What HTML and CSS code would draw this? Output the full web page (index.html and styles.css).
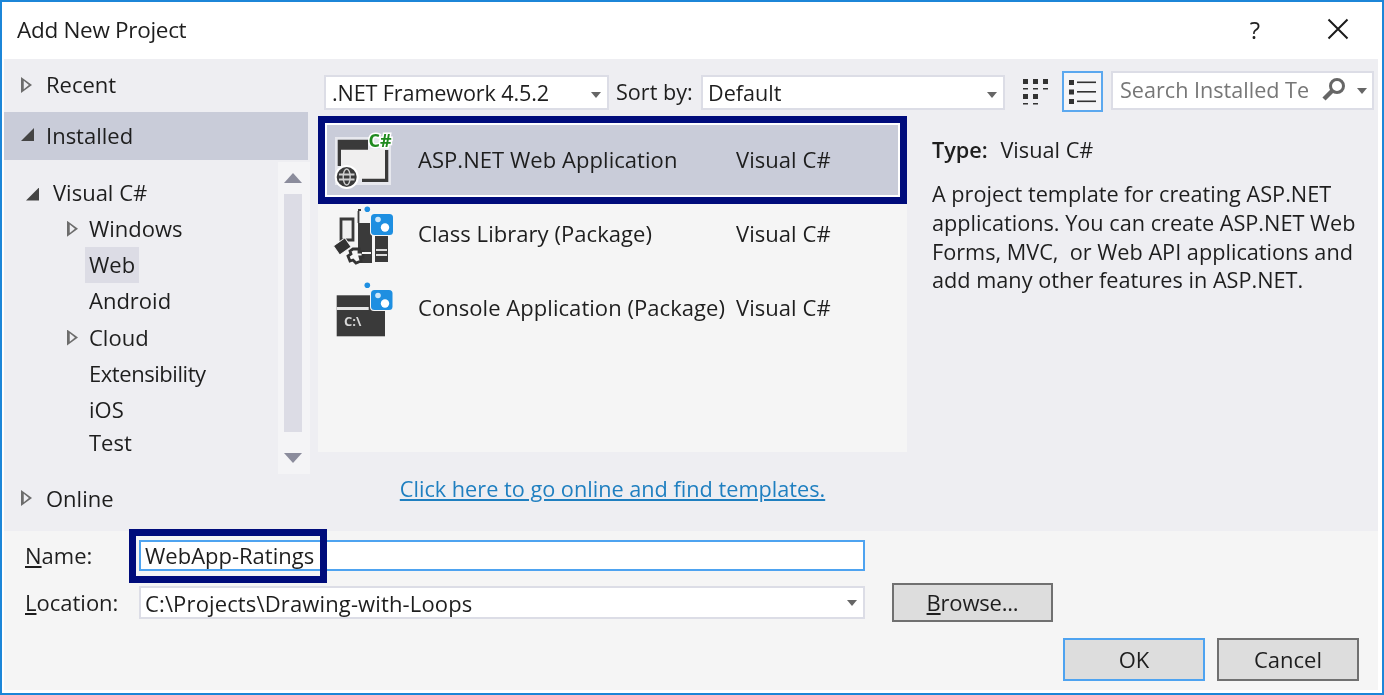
FILE: index.html
```html
<!DOCTYPE html>
<html lang="en">
<head>
<meta charset="utf-8">
<title>Add New Project</title>
<link rel="stylesheet" href="styles.css">
</head>
<body>
<div class="dialog">
  <header class="titlebar">
    <h1 class="title">Add New Project</h1>
    <span class="help">?</span>
    <svg class="close" width="22" height="22" viewBox="0 0 22 22"><path d="M1.500 1.500L20.500 20.500M20.500 1.500L1.500 20.500" stroke="#1a1a1a" stroke-width="2" fill="none"/></svg>
  </header>

  <div class="main">
    <nav class="sidebar">
      <div class="cat cat-recent"><span class="tri tri-open"></span>Recent</div>
      <div class="cat cat-selected"><span class="tri tri-down"></span>Installed</div>
      <div class="treebox">
        <ul class="tree">
          <li class="node node-root"><span class="tri tri-down"></span>Visual C#</li>
          <li class="node"><span class="tri tri-open"></span><span class="lbl">Windows</span></li>
          <li class="node"><span class="lbl lbl-sel">Web</span></li>
          <li class="node"><span class="lbl">Android</span></li>
          <li class="node"><span class="tri tri-open"></span><span class="lbl">Cloud</span></li>
          <li class="node"><span class="lbl lbl-ext">Extensibility</span></li>
          <li class="node"><span class="lbl">iOS</span></li>
          <li class="node node-last"><span class="lbl">Test</span></li>
        </ul>
        <div class="scrollbar">
          <span class="arrow-up"></span>
          <span class="thumb"></span>
          <span class="arrow-down"></span>
        </div>
      </div>
      <div class="cat cat-online"><span class="tri tri-open"></span>Online</div>
    </nav>

    <section class="content">
      <div class="toolbar">
        <div class="combo combo-fw"><span>.NET Framework 4.5.2</span><i class="caret"></i></div>
        <span class="sort-label">Sort by:</span>
        <div class="combo combo-sort"><span>Default</span><i class="caret"></i></div>
        <svg class="view-grid" width="28" height="28" viewBox="0 0 28 28" fill="#333">
          <rect x="1" y="1" width="5" height="5"/><rect x="11" y="1" width="5" height="5"/><rect x="21" y="1" width="5" height="5"/>
          <rect x="1" y="10" width="5" height="1.500"/><rect x="11" y="10" width="5" height="1.500"/><rect x="21" y="10" width="5" height="1.500"/>
          <rect x="1" y="16" width="5" height="5"/><rect x="11" y="16" width="5" height="5"/>
          <rect x="1" y="25" width="5" height="1.500"/><rect x="11" y="25" width="5" height="1.500"/>
        </svg>
        <div class="view-list">
          <svg width="28" height="24" viewBox="0 0 28 24" fill="#333">
            <rect x="0" y="0" width="5" height="5"/><rect x="8" y="1.500" width="19" height="1.600"/>
            <rect x="0" y="9.500" width="5" height="5"/><rect x="8" y="11" width="19" height="1.600"/>
            <rect x="0" y="19" width="5" height="5"/><rect x="8" y="20.500" width="19" height="1.600"/>
          </svg>
        </div>
        <div class="search">
          <span class="search-text">Search Installed Templates</span>
          <svg class="search-icon" width="26" height="24" viewBox="0 0 26 24"><circle cx="16" cy="9" r="6.500" fill="none" stroke="#666" stroke-width="3"/><path d="M11 14L3 22" stroke="#666" stroke-width="4.500" fill="none"/></svg>
          <i class="caret"></i>
        </div>
      </div>

      <div class="panes">
        <div class="listcol">
          <div class="list">
            <div class="row row-selected">
              <svg class="icon" width="66" height="68" viewBox="0 -4 66 68">
                <rect x="3" y="6" width="56" height="48" fill="#fff" opacity=".55"/>
                <rect x="9" y="18" width="44" height="30" fill="#f0efef"/>
                <path d="M5.700 8.700H36V18.700H9V35H5.700Z" fill="#3a3a3a"/>
                <path d="M53 19H56.300V51H30V47.700H53Z" fill="#3a3a3a"/>
                <text class="csharp" x="36.500" y="16">C#</text>
                <circle cx="14.700" cy="46" r="12" fill="#fff"/>
                <circle cx="14.700" cy="46" r="10" fill="#3a3a3a"/>
                <path d="M7 43.500H22.500M7 48.500H22.500" stroke="#cfcfcf" stroke-width="1.800"/>
                <ellipse cx="14.700" cy="46" rx="3.500" ry="8" fill="none" stroke="#cfcfcf" stroke-width="1.400"/>
              </svg>
              <span class="row-name">ASP.NET Web Application</span>
              <span class="row-lang">Visual C#</span>
            </div>
            <div class="row">
              <svg class="icon" width="64" height="60" viewBox="0 0 64 60">
                <path d="M9 14H21V35H9Z" fill="#f0f0f0" stroke="#3a3a3a" stroke-width="2.800"/>
                <path d="M26.500 6V18M26 5H29" stroke="#3a3a3a" stroke-width="1.800" fill="none"/>
                <rect x="26" y="18" width="14" height="40" fill="#3a3a3a"/>
                <rect x="43" y="30" width="13" height="27" fill="#3a3a3a"/>
                <path d="M44 45H55M44 50H55" stroke="#ddd" stroke-width="2"/>
                <rect x="3" y="36" width="14" height="11" transform="rotate(-35 10 41)" fill="#333" stroke="#f5f5f5"/>
                <path d="M21 44h6v3h4v5h-3l1 4-5 2-3-3-3 1-2-5 3-2-1-3z" fill="#f5f5f5" stroke="#333" stroke-width="2.800"/>
                <rect x="30" y="47" width="9" height="2" fill="#f5f5f5"/>
                <rect x="38" y="8" width="24" height="23" rx="4" fill="#f5f5f5"/>
                <rect x="39" y="9" width="22" height="21" rx="3.500" fill="#1e8fe1"/>
                <circle cx="46" cy="14.500" r="2.800" fill="#cfe8fa"/>
                <circle cx="53" cy="22.500" r="4.200" fill="#fff"/>
                <circle cx="35.300" cy="4.300" r="2.800" fill="#1e8fe1"/>
              </svg>
              <span class="row-name">Class Library (Package)</span>
              <span class="row-lang">Visual C#</span>
            </div>
            <div class="row">
              <svg class="icon" width="64" height="60" viewBox="0 0 64 60">
                <rect x="4.700" y="16.300" width="48.300" height="41" fill="#3a3a3a"/>
                <rect x="4.700" y="28" width="32" height="3" fill="#e6e6e6"/>
                <text class="prompt" x="12" y="47">C:\</text>
                <rect x="38" y="10" width="23" height="22" rx="4" fill="#f5f5f5"/>
                <rect x="39" y="11" width="21.500" height="20" rx="3.500" fill="#1e8fe1"/>
                <circle cx="46" cy="16.500" r="2.800" fill="#cfe8fa"/>
                <circle cx="53" cy="24.500" r="4.200" fill="#fff"/>
                <circle cx="35.300" cy="6.300" r="2.800" fill="#1e8fe1"/>
              </svg>
              <span class="row-name">Console Application (Package)</span>
              <span class="row-lang">Visual C#</span>
            </div>
          </div>
          <a class="online-link" href="#">Click here to go online and find templates.</a>
        </div>

        <aside class="details">
          <p class="type"><b>Type:</b> Visual C#</p>
          <p class="desc">A project template for creating ASP.NET applications. You can create ASP.NET Web Forms, MVC,&nbsp; or Web API applications and add many other features in ASP.NET.</p>
        </aside>
      </div>
    </section>
  </div>

  <footer class="bottom">
    <div class="field field-name">
      <label class="field-label"><u>N</u>ame:</label>
      <div class="name-input">
        <span>WebApp-Ratings</span>
        <span class="callout"></span>
      </div>
    </div>
    <div class="field field-loc">
      <label class="field-label"><u>L</u>ocation:</label>
      <div class="loc-input"><span class="loc-text">C:\Projects\Drawing-with-Loops</span><i class="caret"></i></div>
      <button class="btn btn-browse"><u>B</u>rowse...</button>
    </div>
    <div class="actions">
      <button class="btn btn-ok">OK</button>
      <button class="btn">Cancel</button>
    </div>
  </footer>
</div>
</body>
</html>
```

FILE: styles.css
```css
* { box-sizing: border-box; }
html, body { margin: 0; padding: 0; }
body {
  width: 1384px;
  height: 695px;
  overflow: hidden;
  font-family: "Open Sans", "Liberation Sans", sans-serif;
  font-size: 22px;
  color: #1e1e1e;
  background: #fff;
}
.dialog {
  width: 1384px;
  height: 695px;
  border: 2px solid #1c86d8;
  padding: 0 4px 3px 2px;
  background: #fff;
  display: flex;
  flex-direction: column;
  filter: blur(.45px);
}

/* title bar */
.titlebar {
  height: 57px;
  display: flex;
  align-items: center;
  padding: 0 29px 3px 13px;
}
.title { margin: 0; font-size: 22.500px; font-weight: 400; flex: 1; letter-spacing: -.3px; }
.help { font-size: 24px; margin-right: 67px; color: #222; }
.close { display: block; }

/* main */
.main {
  height: 472px;
  background: #eeeef2;
  display: flex;
}
.sidebar { width: 304px; flex: none; display: flex; flex-direction: column; }
.cat { display: flex; align-items: center; flex: none; padding: 0 0 2px 42px; position: relative; }
.cat-recent { height: 46px; margin-top: 3px; margin-bottom: 4px; }
.cat-selected { height: 48px; background: #c9ccd9; }
.cat-online { height: 48px; padding-bottom: 0; }
.cat .tri { position: absolute; left: 17px; top: 50%; margin-top: -8px; }

.tri { display: block; width: 14px; height: 16px; }
.tri-open {
  width: 11px;
  background: #6c6c6c;
  clip-path: polygon(0 0, 100% 50%, 0 100%, 0 0, 25% 24%, 25% 76%, 72% 50%, 25% 24%);
}
.tri-down {
  width: 13px;
  height: 13px;
  background: #444;
  clip-path: polygon(100% 0, 100% 100%, 0 100%);
}

.treebox { height: 312px; margin-top: 2px; display: flex; flex: none; }
.tree { list-style: none; margin: 0; padding: 12.500px 0 0; width: 274px; flex: none; }
.node { height: 36.250px; display: flex; align-items: center; padding-left: 81px; position: relative; }
.node .tri { position: absolute; left: 63px; top: 10px; }
.node-root { padding: 0 0 2px 49px; }
.node-root .tri { left: 22px; top: 13px; }
.node-last { margin-top: -3px; }
.lbl { padding: 0 4px; height: 36px; line-height: 35px; display: block; }
.lbl-sel { background: #dcdce5; }
.lbl-ext { letter-spacing: -.45px; }

.scrollbar {
  width: 32px;
  margin-right: -2px;
  flex: none;
  background: #f4f4f6;
  display: flex;
  flex-direction: column;
  align-items: center;
  padding-top: 11px;
}
.arrow-up { width: 0; height: 0; border: 9px solid transparent; border-top: 0; border-bottom: 10px solid #8b8c9c; margin-left: -2px; }
.thumb { width: 18px; height: 238px; background: #dcdce5; margin-top: 11px; margin-left: -2px; }
.arrow-down { width: 0; height: 0; border: 9px solid transparent; border-bottom: 0; border-top: 10px solid #8b8c9c; margin-top: 21px; margin-left: -2px; }

/* content */
.content { flex: 1; min-width: 0; display: flex; flex-direction: column; }
.toolbar { height: 57px; padding-top: 12px; display: flex; align-items: flex-start; font-size: 21.600px; }
.combo {
  height: 35px;
  margin-top: 4px;
  background: #fff;
  border: 2px solid #dcdde6;
  display: flex;
  align-items: center;
  padding: 0 6px 1px;
  position: relative;
}
.combo-fw { width: 285px; margin-left: 16px; letter-spacing: -.12px; }
.combo-sort { width: 304px; margin-left: 8px; padding-left: 5px; }
.sort-label { margin-left: 7px; width: 77px; line-height: 42px; white-space: nowrap; flex: none; }
.caret {
  display: block;
  width: 0;
  height: 0;
  border: 5px solid transparent;
  border-bottom: 0;
  border-top: 6px solid #666;
}
.combo .caret { position: absolute; right: 6px; top: 15px; }
.view-grid { margin: 7px 0 0 17px; flex: none; }
.view-list {
  width: 41px;
  height: 41px;
  margin-left: 12px;
  border: 2px solid #5ba8ef;
  background: #f5f5f7;
  display: flex;
  align-items: center;
  justify-content: center;
  flex: none;
}
.search {
  width: 263px;
  height: 39px;
  margin-left: 8px;
  background: #fff;
  border: 2px solid #dcdde6;
  display: flex;
  align-items: center;
  padding: 0 0 3px 7px;
  flex: none;
  position: relative;
}
.search-text { width: 189px; overflow: hidden; white-space: nowrap; color: #777; }
.search-icon { margin-left: 12px; flex: none; }
.search .caret { position: absolute; right: 5px; top: 15px; }

.panes { display: flex; flex: 1; min-height: 0; }
.listcol { width: 589px; margin-left: 10px; flex: none; display: flex; flex-direction: column; align-items: center; }
.list {
  width: 589px;
  height: 336px;
  background: #f5f5f5;
  padding: 7px 7px 0;
}
.row {
  height: 74px;
  display: grid;
  grid-template-columns: 93px 318px 1fr;
  align-items: center;
  padding-bottom: 3px;
}
.row-selected {
  background: #c9ccd9;
  outline: 7px solid #000c7b;
  box-shadow: inset 0 0 0 2px #fff;
}
.row .icon { display: block; margin-left: 7px; position: relative; top: 2px; }
.row-name, .row-lang { white-space: nowrap; letter-spacing: .05px; }
.csharp {
  font: 700 18px "Open Sans", sans-serif;
  fill: #1f8a1f;
  stroke: #fff;
  stroke-width: 3px;
  paint-order: stroke;
}
.prompt { font: 700 13px "Open Sans", sans-serif; fill: #d8d8d8; }
.online-link { margin-top: 21px; color: #1f7fc0; line-height: 32px; font-size: 21.700px; }

.details { flex: 1; padding: 16px 6px 0 25px; min-width: 0; }
.type { margin: 0; line-height: 36px; font-size: 21.700px; }
.type b { font-weight: 600; margin-right: 7px; }
.desc { margin: 12px 0 0; line-height: 28.800px; font-size: 21.700px; }

/* bottom */
.bottom { flex: 1; background: #f5f5f5; padding: 9px 19px 0 21px; }
.field { display: flex; align-items: center; }
.field-label { width: 114px; flex: none; position: relative; top: -1px; }
.name-input {
  width: 726px;
  height: 31px;
  background: #fff;
  border: 2px solid #4ea3f0;
  display: flex;
  align-items: center;
  padding: 0 0 2px 4px;
  position: relative;
}
.callout {
  position: absolute;
  left: -12px;
  top: -13px;
  width: 198px;
  height: 54px;
  border: 7px solid #000c7b;
}
.field-loc { height: 39px; margin-top: 12px; }
.loc-input {
  width: 726px;
  height: 33px;
  background: #fff;
  border: 2px solid #dcdde6;
  display: flex;
  align-items: center;
  padding-left: 4px;
  position: relative;
}
.loc-text { letter-spacing: .14px; }
.loc-input .caret { position: absolute; right: 6px; top: 12px; }
.btn {
  font: inherit;
  color: inherit;
  width: 142px;
  height: 43px;
  background: #dddddd;
  border: 2px solid #707070;
  padding: 0 0 2px;
}
.btn-browse { width: 161px; height: 39px; margin-left: 27px; letter-spacing: -.2px; }
.btn-ok { border-color: #4ea3f0; }
.actions { display: flex; justify-content: flex-end; gap: 12px; margin-top: 16px; }
```
